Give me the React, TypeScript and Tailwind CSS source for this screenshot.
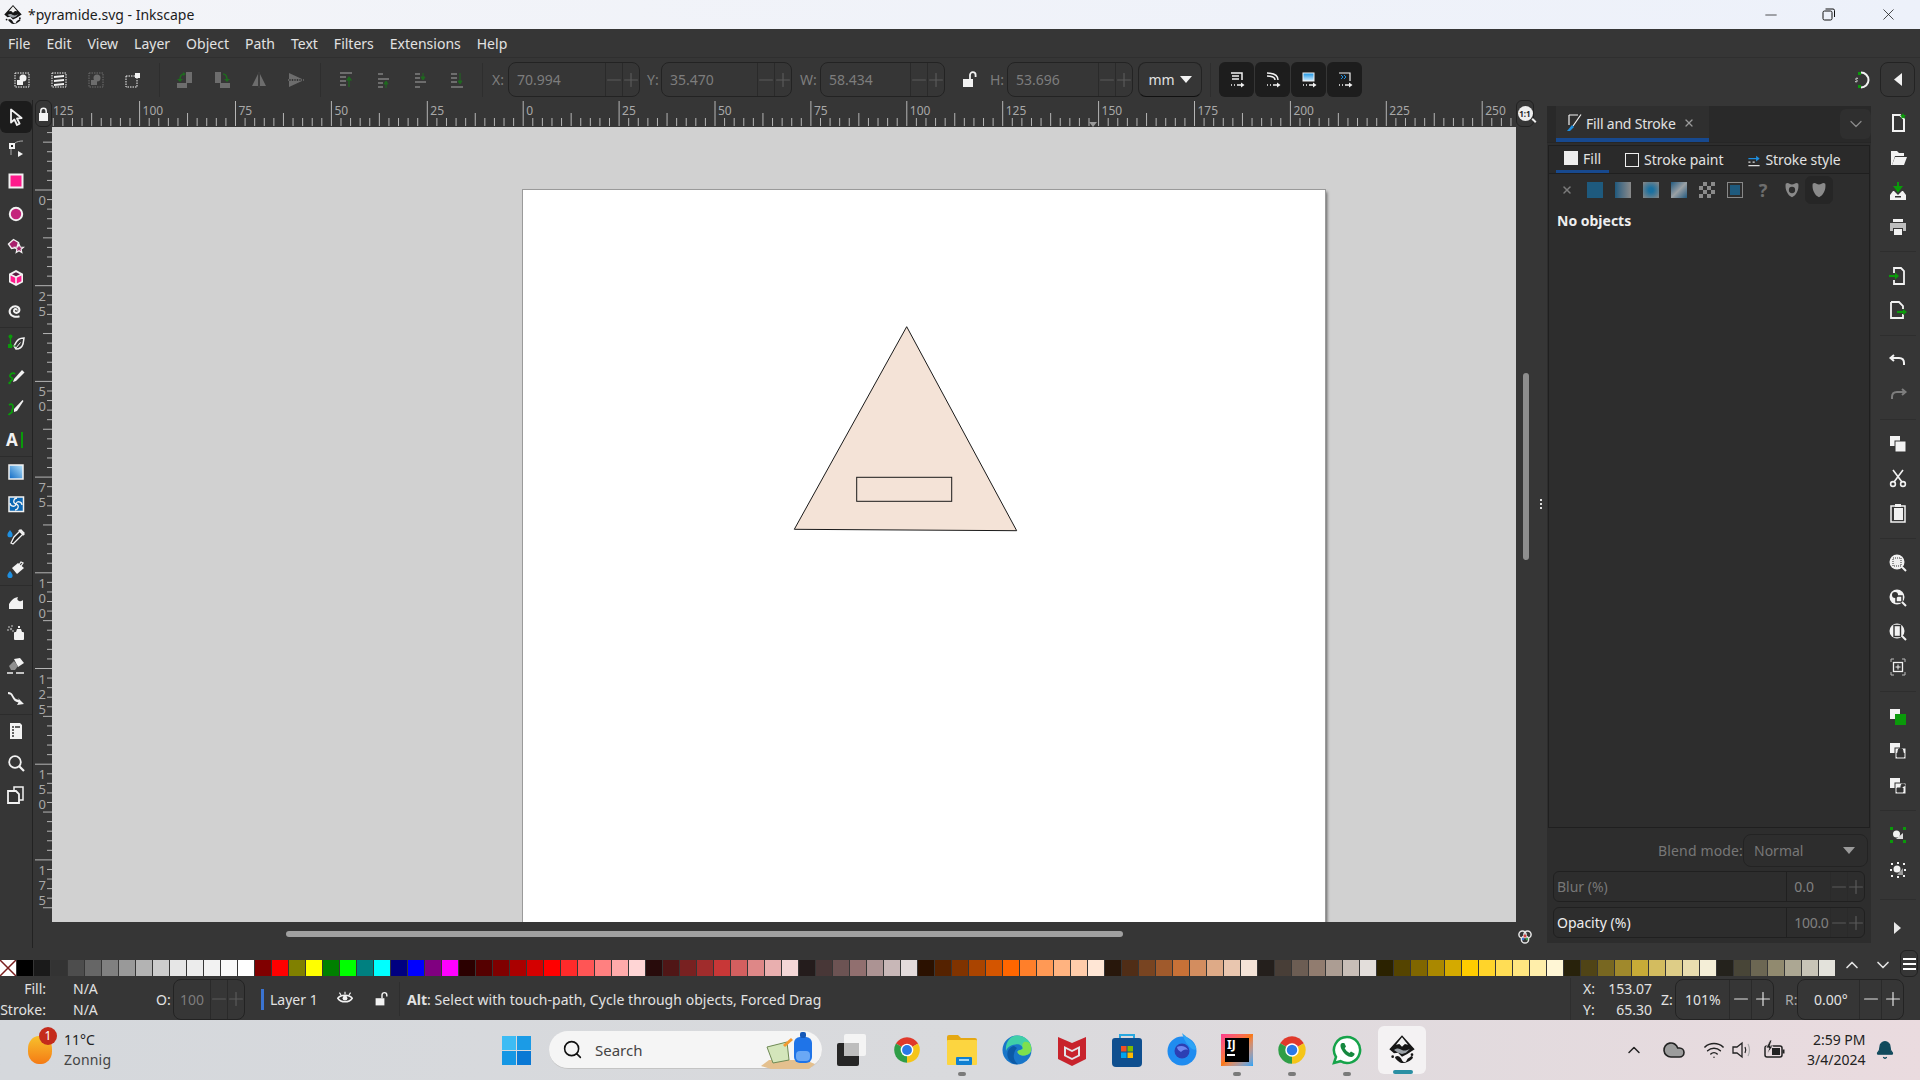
import type { ReactNode } from "react";
import { Bell, ChevronDown, ChevronUp, Cloud, Minus, Plus, Search, Wifi, X } from "lucide-react";

const W = "#f2f2f2";
const G = "#0a9a0a";
const B = "#1e8fe0";

const I = ({ children, size = 20 }: { children: ReactNode; size?: number }) => (
  <svg width={size} height={size} viewBox="0 0 20 20" fill="none" className="shrink-0">
    {children}
  </svg>
);

const palette = [
  "#000000", "#1a1a1a", "#333333", "#4d4d4d", "#666666", "#808080", "#999999", "#b3b3b3", "#cccccc", "#e6e6e6", "#ececec", "#f2f2f2", "#f9f9f9", "#ffffff",
  "#800000", "#ff0000", "#808000", "#ffff00", "#008000", "#00ff00", "#008080", "#00ffff", "#000080", "#0000ff", "#800080", "#ff00ff",
  "#2b0000", "#550000", "#800000", "#aa0000", "#d40000", "#ff0000", "#ff2a2a", "#ff5555", "#ff8080", "#ffaaaa", "#ffd5d5",
  "#280b0b", "#501616", "#782121", "#a02c2c", "#c83737", "#d35f5f", "#de8787", "#e9afaf", "#f4d7d7",
  "#241c1c", "#483737", "#6c5353", "#916f6f", "#ac9393", "#c8b7b7", "#e3dbdb",
  "#2b1100", "#552200", "#803300", "#aa4400", "#d45500", "#ff6600", "#ff7f2a", "#ff9955", "#ffb380", "#ffccaa", "#ffe6d5",
  "#28170b", "#502d16", "#784421", "#a05a2c", "#c87137", "#d38d5f", "#deaa87", "#e9c6af", "#f4e3d7",
  "#241f1c", "#483e37", "#6c5d53", "#917c6f", "#ac9d93", "#c8beb7", "#e3dedb",
  "#2b2200", "#554400", "#806600", "#aa8800", "#d4aa00", "#ffcc00", "#ffd42a", "#ffdd55", "#ffe680", "#ffeeaa", "#fff6d5",
  "#28220b", "#504416", "#786721", "#a0892c", "#c8ab37", "#d3bc5f", "#decd87", "#e9ddaf", "#f4eed7",
  "#24221c", "#484537", "#6c6753", "#918a6f", "#aca793", "#c8c4b7", "#e3e2db",
];

// left tool column, one entry per tool, sep = divider above, raw = not an svg
const tools: { sep?: boolean; raw?: boolean; icon: ReactNode }[] = [
  { icon: <path d="M5 2.500v13l3.400-3 2.600 5.500 2.600-1.300-2.600-5.200 4.600-.5z" fill="#222" stroke={W} strokeWidth="1.800" strokeLinejoin="round" /> },
  { icon: <><rect x="3" y="4" width="6" height="6" fill={W} /><rect x="5" y="6" width="2" height="2" fill="#222" /><path d="M9 4c2-1.500 5-2 8-2" stroke="#aaa" /><path d="M12 12l5 3-5 3z" fill={W} /><path d="M5 10v6" stroke="#aaa" /></> },
  { icon: <rect x="3.500" y="3.500" width="13" height="13" fill="#ff1a8c" stroke={W} strokeWidth="2" /> },
  { icon: <circle cx="10" cy="10" r="6.200" fill="#c4267c" stroke={W} strokeWidth="2" /> },
  { icon: <><path d="M2.500 8l5-4.500 5 3-1.500 5-5.500 1z" fill="#a8206c" stroke={W} strokeWidth="1.400" /><path d="M13 8l1.300 3 3.200.3-2.400 2 .7 3.200-2.800-1.700-2.800 1.700.7-3.200-2.400-2 3.200-.3z" fill="#a8206c" stroke={W} strokeWidth="1.200" /></> },
  { icon: <><path d="M10 2l7 3.700v8.600L10 18l-7-3.700V5.700z" fill={W} /><path d="M10 4.200l4 2-4 2-4-2z" fill="#5a1c42" /><path d="M4.600 7.500l4.600 2.300v5.800l-4.600-2.400z" fill="#ff1a8c" /><path d="M15.400 7.500l-4.600 2.300v5.800l4.600-2.400z" fill="#ff1a8c" /></> },
  { icon: <path d="M10.500 10.500c.8-1.400-1.400-2-2.300-.6-1 1.900 1.200 3.600 3.300 2.700 3-1.400 2.300-5.500-1-6.200-4.500-.7-8 3-6.500 7 1.200 3 5.800 4.200 9.500 2.800" stroke={W} strokeWidth="2" /> },
  { sep: true, icon: <><path d="M8 13c3-7 6-8 10-8l-1 6c-1 3-3 5-7 5z" fill="none" stroke={W} strokeWidth="1.500" /><path d="M9.500 15.500l5-6" stroke={W} /><circle cx="4.500" cy="3.500" r="2" fill={G} /><rect x="2" y="11" width="4" height="4" fill={G} /><path d="M4.500 5v6" stroke={G} strokeWidth="1.400" /><path d="M5 13h4" stroke={G} /></> },
  { icon: <><path d="M8 14L16 5l2.500 2.500L10 16l-3 1z" fill={W} /><path d="M5 17c-2-1 3-2 1-4-2-1-3-2-1-4 1-1 3-1 4 0" stroke={G} strokeWidth="1.800" /><circle cx="3.500" cy="18" r="1.200" fill={G} /></> },
  { icon: <><path d="M8 12L16.500 3l1 1-6.500 10-3 1z" fill={W} /><path d="M3 8c3-2 4 0 4 2s-2 4-1 5c-1 1-3 2-3.500 3" stroke={G} strokeWidth="1.800" /></> },
  { raw: true, icon: <div className="flex h-[20px] w-[20px] items-center"><span className="text-[17px] font-bold leading-none text-[#f2f2f2]">A</span><span className="ml-[3px] h-[16px] w-[2px] bg-[#0a9a0a]" /></div> },
  { sep: true, icon: <><defs><linearGradient id="gt" x1="0" y1="1" x2="1" y2="0"><stop offset="0" stopColor="#0b68c4" /><stop offset="1" stopColor="#b8e4fb" /></linearGradient></defs><rect x="3" y="3" width="14" height="14" fill="url(#gt)" stroke={W} strokeWidth="1.500" /></> },
  { icon: <><rect x="3" y="3" width="14.500" height="14.500" fill="#0a67b4" stroke={W} strokeWidth="1.500" /><path d="M10 10c-4-1-2-6 1-6M10 10c4 1 2 6-1 6M10 10c-1 4-6 2-6-1M10 10c1-4 6-2 6 1" stroke={W} strokeWidth="1.300" /></> },
  { icon: <><path d="M8 10l7-7 3 3-7 7-4 4-2-1 1-2z" fill="#222" stroke={W} strokeWidth="1.300" /><path d="M13 3l5 5" stroke={W} strokeWidth="2.400" /><path d="M4 3c1.500 2 2.600 3.300 2.600 4.700a2.600 2.600 0 01-5.200 0C1.400 6.300 2.500 5 4 3z" fill={B} /></> },
  { icon: <><path d="M6 9l6-5 6 5-7 6z" fill={W} /><path d="M13 6l2-3 2 1-2 3" stroke={W} strokeWidth="1.300" /><path d="M4 12c1.500 2 2.600 3 2.600 4.500a2.600 2.600 0 01-5.200 0C1.400 15 2.500 14 4 12z" fill={B} /></> },
  { sep: true, icon: <path d="M3 17v-5c2-3 4-6 9-7-1 2-1 3 1 4 2 .5 3 0 4-1v9z" fill={W} /> },
  { icon: <><rect x="8" y="9" width="10" height="8" rx="1" fill={W} /><path d="M10 9l1-3h4l1 3z" fill={W} /><rect x="12" y="3" width="2" height="2" fill={W} /><g fill="#999"><circle cx="3" cy="4" r="1" /><circle cx="6" cy="3" r="1" /><circle cx="5" cy="6" r="1.200" /><circle cx="2" cy="7" r="1" /><circle cx="7" cy="8" r="1" /></g></> },
  { icon: <><path d="M8 3l6-1 4 5-6 4z" fill={W} /><path d="M3 10l5-5 4 5-3 4H5z" fill="#8f8f8f" /><path d="M1 17h6M10 17h8" stroke={W} strokeWidth="1.400" /></> },
  { icon: <path d="M2 4c3 0 4 1 5.500 4s3 3.500 5.500 4l-1-2 6 6-7 1 1.500-2.500C9 14 7.500 12 6 9S4 6.500 2 6z" fill={W} /> },
  { sep: true, icon: <><path d="M4 2h10l2 2v14H4z" fill={W} /><path d="M6 6h2M6 9h2M6 12h2M6 15h2M9 6h5" stroke="#333" strokeWidth="1.300" /></> },
  { icon: <><circle cx="9" cy="9" r="5.800" stroke={W} strokeWidth="1.800" /><path d="M13 13l5 5" stroke={W} strokeWidth="2.200" /></> },
  { icon: <><path d="M8 5V2h9v13h-4" stroke={W} strokeWidth="1.500" /><path d="M2 6h8l3 3v9H2z" fill="#333" stroke={W} strokeWidth="1.800" /></> },
];

const doc = "M5 2h7l4 4v12H5z";
const right: ({ icon: ReactNode } | { sep: number })[] = [
  { icon: <><path d={doc} stroke={W} strokeWidth="2" /><path d="M15 0l1 2 2 .3-1.500 1.400.4 2-1.900-1-1.900 1 .4-2L12 2.300 14 2z" fill={G} /></> },
  { icon: <><path d="M3 3h6l2 2h5v3H7l-3 9H3z" fill={W} /><path d="M7 9h12l-3 8H4z" fill={W} /></> },
  { icon: <><path d="M10 0v6M7 5l3 4 3-4z" stroke={G} strokeWidth="2" fill={G} /><path d="M5 9L2 13v5h16v-5l-3-4h-1l-4 4-4-4z" fill={W} /><rect x="7" y="14" width="6" height="1.500" fill="#333" /></> },
  { icon: <><rect x="5" y="2" width="10" height="3" fill={W} /><path d="M2 6h16v8h-3v-3H5v3H2z" fill="#bdbdbd" /><rect x="6" y="12" width="8" height="6" fill={W} /></> },
  { sep: 14.5 },
  { icon: <><path d="M6 7V2h7l3 3v13H6v-4" stroke={W} strokeWidth="1.800" /><path d="M1 10h8" stroke={G} strokeWidth="2.200" /><path d="M7 6.500l4 3.500-4 3.500z" fill={G} /></> },
  { icon: <><path d="M3 2h8l4 4v3M15 14v4H3V2" stroke={W} strokeWidth="1.800" /><path d="M9 12h8" stroke={G} strokeWidth="2.200" /><path d="M15 9l4 3-4 3z" fill={G} /></> },
  { sep: 15 },
  { icon: <><path d="M6 5l-3.500 3L6 11" stroke={W} strokeWidth="2" /><path d="M3 8h8c3 0 5 1.500 5 5v2" stroke={W} strokeWidth="2" /></> },
  { icon: <><path d="M14 5l3.500 3L14 11" stroke="#7d7d7d" strokeWidth="2" /><path d="M17 8H9c-3 0-5 1.500-5 5v2" stroke="#7d7d7d" strokeWidth="2" /></> },
  { sep: 15 },
  { icon: <><rect x="2" y="2" width="10" height="10" fill={W} /><rect x="7" y="7" width="11" height="11" fill={W} stroke="#333" /></> },
  { icon: <><path d="M5 2l9 12M15 2L6 14" stroke={W} strokeWidth="1.600" /><circle cx="5" cy="16" r="2.400" stroke={W} strokeWidth="1.600" /><circle cx="15" cy="16" r="2.400" stroke={W} strokeWidth="1.600" /></> },
  { icon: <><rect x="3" y="3" width="14" height="16" stroke={W} strokeWidth="1.500" /><rect x="6" y="5" width="9" height="12" fill={W} /><rect x="7" y="1" width="6" height="3" fill={W} /></> },
  { sep: 16 },
  { icon: <><circle cx="9" cy="9" r="7.500" fill={W} /><rect x="5" y="5" width="8" height="8" fill="#eee" stroke="#333" strokeDasharray="1 1" /><path d="M14 14l4 4" stroke={W} strokeWidth="2" /></> },
  { icon: <><circle cx="9" cy="9" r="7.500" fill={W} /><rect x="8" y="8" width="6" height="6" fill={W} stroke="#333" strokeWidth="1.500" /><circle cx="7" cy="7" r="3" fill="#333" /><path d="M14 14l4 4" stroke={W} strokeWidth="2" /></> },
  { icon: <><circle cx="9" cy="9" r="7.500" fill={W} /><rect x="6" y="3.500" width="6.500" height="11" fill={W} stroke="#333" strokeWidth="1.400" /><path d="M14 14l4 4" stroke={W} strokeWidth="2" /></> },
  { icon: <><path d="M3 5V2h3M14 2h3v3M17 15v3h-3M6 18H3v-3" stroke="#bbb" strokeWidth="1" /><rect x="5.500" y="5.500" width="9" height="9" stroke={W} strokeWidth="1.300" /><path d="M10 7.500v5M7.500 10h5" stroke={W} /></> },
  { sep: 15.5 },
  { icon: <><rect x="2" y="2" width="10" height="10" fill={W} /><rect x="7" y="7" width="11" height="11" fill="#0a9a0a" /></> },
  { icon: <><rect x="2" y="2" width="10" height="10" fill={W} /><rect x="7" y="7" width="11" height="11" fill={W} stroke="#333" /><path d="M10 12v-2a2.500 2.500 0 015 0v2M9 12h7v4H9z" fill="#333" stroke="#333" /></> },
  { icon: <><rect x="2" y="2" width="10" height="10" fill={W} /><rect x="7" y="7" width="11" height="11" fill={W} stroke="#333" /><path d="M13 12v-2a2 2 0 014 0M9 12h6v4H9z" fill="#333" stroke="#333" /></> },
  { sep: 15 },
  { icon: <><g fill={G}><rect x="2" y="2" width="3" height="3" /><rect x="15" y="2" width="3" height="3" /><rect x="2" y="15" width="3" height="3" /><rect x="15" y="15" width="3" height="3" /></g><path d="M8 14h7v-6z" fill="#ddd" /><circle cx="8.500" cy="9" r="3.500" fill={W} /></> },
  { icon: <><g fill={W}><rect x="3" y="3" width="2" height="2" /><rect x="15" y="3" width="2" height="2" /><rect x="3" y="15" width="2" height="2" /><rect x="15" y="15" width="2" height="2" /><rect x="9" y="2" width="2" height="2" /><rect x="9" y="16" width="2" height="2" /><rect x="2" y="9" width="2" height="2" /><rect x="16" y="9" width="2" height="2" /></g><path d="M9 15h6V8z" fill="#999" /><circle cx="9" cy="9" r="3.500" fill={W} /></> },
  { sep: 24 },
  { icon: <path d="M6 4l7 6-7 6z" fill="#e8e8e8" /> },
];

const Spin = ({ value, cls, ctlCls = "w-[17px]", text = "text-[#7d7d7d]", ctl = "text-[#5a5a5a]", tall = 35, pad = "pl-2" }: { value: string; cls: string; ctlCls?: string; text?: string; ctl?: string; tall?: number; pad?: string }) => (
  <div className={`flex shrink-0 rounded-lg border border-[#232323] ${cls}`} style={{ height: tall }}>
    <span className={`flex flex-1 items-center ${pad} ${text}`}>{value}</span>
    <span className={`flex items-center justify-center border-l border-[#2a2a2a] ${ctlCls} ${ctl}`}><Minus size={22} strokeWidth={1.3} className="shrink-0" /></span>
    <span className={`flex items-center justify-center border-l border-[#2a2a2a] ${ctlCls} ${ctl}`}><Plus size={22} strokeWidth={1.3} className="shrink-0" /></span>
  </div>
);

const Label = ({ t, w }: { t: string; w: string }) => <span className={`shrink-0 text-[#7d7d7d] ${w}`}>{t}</span>;

const TopBtn = ({ children }: { children: ReactNode }) => <div className="flex h-[35px] w-[37px] items-center justify-center">{children}</div>;

const XformBtn = ({ children }: { children: ReactNode }) => <div className="flex h-[35px] w-[35px] shrink-0 items-center justify-center rounded-md bg-[#1d1d1d]">{children}</div>;

const xformBase = <><path d="M4 3h11v7" stroke={W} strokeWidth="1.500" /><path d="M5 6h7M5 9h7" stroke={W} strokeWidth="1.500" /><path d="M4 15h1M7 15h1M10 15h6" stroke={W} strokeWidth="1.500" /><path d="M14 12.500l3.500 2.500-3.500 2.500z" fill={W} /></>;

const Ruler = () => (
  <svg width="1464" height="27" className="block shrink-0">
    {Array.from({ length: 160 }).map((_, i) => {
      const x = -8.3 + i * 9.59;
      const major = i % 10 === 0;
      const half = i % 5 === 0;
      return <line key={i} x1={x} x2={x} y1={major ? 1 : half ? 13 : 18} y2={26} stroke="#b5b5b5" strokeWidth="1" />;
    })}
    {["125", "100", "75", "50", "25", "0", "25", "50", "75", "100", "125", "150", "175", "200", "225", "250"].map((t, i) => (
      <text key={i} x={i === 0 ? 1 : -8.3 + i * 95.9 + 3} y={15} fontSize="12" fill="#a8a8a8">{t}</text>
    ))}
    <path d="M1041 27l-4-5h8z" fill="#9a9a9a" />
  </svg>
);

const VRuler = () => (
  <svg width="19" height="820" className="block shrink-0">
    {Array.from({ length: 86 }).map((_, i) => {
      const y = 63 - 95.7 + i * 9.57;
      const major = i % 10 === 0;
      const half = i % 5 === 0;
      return <line key={i} y1={y} y2={y} x1={major ? 2 : half ? 10 : 14} x2={19} stroke="#b5b5b5" strokeWidth="1" />;
    })}
    {["0", "25", "50", "75", "100", "125", "150", "175"].map((t, i) =>
      t.split("").map((c, j) => (
        <text key={`${i}-${j}`} x={5.5} y={63 + i * 95.7 + 15 + j * 15} fontSize="13" fill="#a8a8a8">{c}</text>
      )),
    )}
  </svg>
);

const Chrome = ({ size = 28 }: { size?: number }) => (
  <svg width={size} height={size} viewBox="0 0 24 24">
    <path d="M12 12L2.500 6.500A11 11 0 0121.500 6.500z" fill="#e0392b" />
    <path d="M12 12l9.500-5.500A11 11 0 0112 23z" fill="#f5c518" />
    <path d="M12 12v11A11 11 0 012.500 6.500z" fill="#2f9e47" />
    <circle cx="12" cy="12" r="5.400" fill="#fff" />
    <circle cx="12" cy="12" r="4.200" fill="#2a79e6" />
  </svg>
);

const InkscapeLogo = ({ size = 24 }: { size?: number }) => (
  <svg width={size} height={size} viewBox="0 0 24 24">
    <path d="M12 1L2.500 11.500 6 14.500l3-.5 3 3 4-2 5.500-3.500z" fill="#161616" />
    <path d="M12 2.500L7.500 8l2.500-.5L12 9.500l2.200-2L16.500 8z" fill="#f2f2f2" />
    <path d="M6 12c3-2 4-1 6 0s4 0 6-1l-3 3-3 1-3-1z" fill="#9aa0a6" />
    <path d="M7 17c2-1 3 0 4 1s1 3 3 3 1-2 3-3 2-2 3-1-2 3-4 4-5 1-6 0-4-3-3-4z" fill="#161616" />
    <circle cx="19.500" cy="15.500" r="1" fill="#161616" />
    <circle cx="5" cy="17" r="1" fill="#161616" />
  </svg>
);

const taskIcons: { dot?: boolean; icon: ReactNode }[] = [
  { icon: <svg width="32" height="34" viewBox="0 0 32 34"><rect x="8" y="1" width="22" height="22" rx="2" fill="#f4f4f4" /><rect x="1" y="10" width="22" height="23" rx="2" fill="#262626" /><rect x="8" y="10" width="15" height="13" fill="#bdbdbd" /></svg> },
  { icon: <Chrome size={28} /> },
  { dot: true, icon: <svg width="30" height="32" viewBox="0 0 30 32"><path d="M0 3a2 2 0 012-2h9l3 3h14a2 2 0 012 2v3H0z" fill="#e5a812" /><rect y="6" width="30" height="25" rx="1" fill="#fcd540" /><rect x="9" y="23" width="16" height="8" rx="1" fill="#0f7fd1" /><rect x="12" y="25" width="10" height="2" fill="#9fd5f5" /></svg> },
  { icon: <svg width="30" height="30" viewBox="0 0 30 30"><circle cx="15" cy="15" r="14.500" fill="#1976c9" /><path d="M15 .5c8 0 14.500 6 14.500 13 0 5-4 7-8 7-3 0-6-1.500-6-4 1-2 4-1 5-3 .7-2-3-5-7-4C8 10 5 13 4 16 3 8 8 .5 15 .5z" fill="#40d0a8" /><path d="M28 9c1.500 3 1.500 6 .5 8-1 2-4 3.500-7 3.500-3 0-6-1.500-6-4 1-2 5-1 5.500-3-1-3-1-5 1-6.500 3-.5 5 .5 6 2z" fill="#7ee04e" /><path d="M12 11c-5 1-8 6-6 12 2 4 6 7 10 6-3-2-5-6-4-10 .5-3 2-5 3-6z" fill="#0c5aa6" /></svg> },
  { icon: <svg width="28" height="32" viewBox="0 0 28 32"><path d="M0 3l14 6 14-6v22l-14 7-14-7z" fill="#c8232c" /><path d="M6 12l8 4 8-4v10l-8 4-8-4z" fill="#e2e4e8" /><path d="M8 15l6 3 6-3v6l-6 3-6-3z" fill="#c8232c" /></svg> },
  { icon: <svg width="30" height="36" viewBox="0 0 30 36"><path d="M8 7V3h14v4" fill="none" stroke="#28a8e0" strokeWidth="2" /><path d="M0 9a3 3 0 013-3h24a3 3 0 013 3v22a4 4 0 01-4 4H4a4 4 0 01-4-4z" fill="#0f4f8f" /><rect x="9" y="14" width="5.500" height="5.500" fill="#f25022" /><rect x="15.500" y="14" width="5.500" height="5.500" fill="#7fba00" /><rect x="9" y="20.500" width="5.500" height="5.500" fill="#00a4ef" /><rect x="15.500" y="20.500" width="5.500" height="5.500" fill="#ffb900" /></svg> },
  { icon: <svg width="30" height="34" viewBox="0 0 30 34"><circle cx="15" cy="18" r="14.500" fill="#1f8cf0" /><path d="M15 0c3 3 11 8 14 14 1 4-3 3-5 1-3-3-6-5-9-15z" fill="#2ea4f5" /><circle cx="15" cy="18" r="7.500" fill="#2c3fb3" /><path d="M10 14c4-2 9-1 11 3-3-1-5 0-7 2-2-1-4-3-4-5z" fill="#6d87f0" /></svg> },
  { dot: true, icon: <div className="flex h-8 w-8 items-center justify-center bg-gradient-to-br from-[#fc3a8e] via-[#f97a12] to-[#09a3f7] p-[4px]"><div className="flex h-full w-full flex-col bg-black pl-[2px] text-[12px] font-bold leading-[14px] text-white"><span>IJ</span><span className="mt-[2px] h-[2px] w-[8px] bg-white" /></div></div> },
  { dot: true, icon: <Chrome size={30} /> },
  { dot: true, icon: <svg width="30" height="30" viewBox="0 0 30 30"><path d="M15 2a13 13 0 00-11 20L2 28l6.500-1.800A13 13 0 1015 2z" fill="#fff" stroke="#16a34a" strokeWidth="2.500" /><path d="M10 8c-2 1-2 4 0 7 2 4 6 7 9 7 2 0 4-2 3.500-3.500l-3.500-2-1.500 1.500c-2-.8-4-3-4.800-4.700L14 11.500 12.300 8z" fill="#16883f" /></svg> },
];

function App() {
  return (
    <div className="flex h-[1080px] w-[1920px] flex-col overflow-hidden bg-[#363636] font-['Noto_Sans',sans-serif] text-[14px] text-[#e2e2e2]">
      {/* window title */}
      <div className="flex h-[29px] shrink-0 items-center bg-gradient-to-r from-[#f3f4f8] to-[#edf1fa] text-[14px] text-[#1c1c1c]">
        <span className="ml-[2px]"><InkscapeLogo size={22} /></span>
        <span className="ml-[4px]">*pyramide.svg - Inkscape</span>
        <div className="ml-auto flex items-center">
          <Minus size={18} strokeWidth={1} className="mr-[42px]" />
          <svg width="13" height="13" viewBox="0 0 13 13" fill="none" stroke="#111" className="mr-[44px]"><rect x="1" y="3" width="9" height="9" rx="1.500" /><path d="M3.500 1H11a1.500 1.500 0 011.500 1.500V9" /></svg>
          <X size={19} strokeWidth={1} className="mr-[22px]" />
        </div>
      </div>

      {/* menu */}
      <div className="flex h-[29px] shrink-0 items-center border-b border-[#2f2f2f] pl-[8px] pt-[2px]">
        {["File", "Edit", "View", "Layer", "Object", "Path", "Text", "Filters", "Extensions", "Help"].map((m) => (
          <span key={m} className="mr-[16px] leading-none">{m}</span>
        ))}
      </div>

      {/* command toolbar */}
      <div className="flex h-[42px] shrink-0 items-center pl-[3px] pt-[1px]">
        <TopBtn><I><rect x="3" y="3" width="14" height="14" stroke={W} strokeDasharray="1.500 1" /><circle cx="11" cy="8" r="3.500" fill={W} /><rect x="5" y="10" width="6" height="5" fill={W} /></I></TopBtn>
        <TopBtn><I><rect x="3" y="3" width="14" height="14" stroke={W} strokeDasharray="1.500 1" /><path d="M5 6l10-1v2L5 8zM5 10l10-1v2L5 12zM5 14l10-1v2l-10 1z" fill={W} /></I></TopBtn>
        <TopBtn><I><rect x="3" y="3" width="14" height="14" stroke="#6d6d6d" strokeDasharray="1.500 1" /><circle cx="11" cy="8" r="3.500" fill="#6d6d6d" /><rect x="5" y="10" width="6" height="5" fill="#6d6d6d" /></I></TopBtn>
        <TopBtn><I><rect x="3" y="6" width="11" height="11" stroke={W} strokeDasharray="1.500 1" /><rect x="12" y="3" width="5" height="5" fill={W} /></I></TopBtn>
        <div className="ml-[8px] mr-[6px] h-[34px] w-px bg-[#2e2e2e]" />
        <TopBtn><I><rect x="11" y="2" width="6" height="11" fill="#6d6d6d" /><rect x="2" y="13" width="10" height="5" fill="#6d6d6d" /><path d="M9 4C6 4 5 6 5 10" stroke="#1f6a1f" strokeWidth="1.600" /><path d="M2 9l3 3 3-3zM8 2v4l3-2z" fill="#1f6a1f" /></I></TopBtn>
        <TopBtn><I><rect x="3" y="2" width="6" height="11" fill="#6d6d6d" /><rect x="8" y="13" width="10" height="5" fill="#6d6d6d" /><path d="M11 4c3 0 4 2 4 6" stroke="#1f6a1f" strokeWidth="1.600" /><path d="M12 9l3 3 3-3z" fill="#1f6a1f" /></I></TopBtn>
        <TopBtn><I><path d="M9 4L3 16h6zM11 4l6 12h-6z" fill="#6d6d6d" /><path d="M10 2v16" stroke="#444" /></I></TopBtn>
        <TopBtn><I><path d="M3 3l13 6H3zM3 11h13L3 17z" fill="#6d6d6d" /><path d="M2 10h16" stroke="#8a8a8a" strokeDasharray="1.500 1" /></I></TopBtn>
        <div className="ml-[6px] mr-[6px] h-[34px] w-px bg-[#2e2e2e]" />
        <TopBtn><I><path d="M4 3h12M4 7h6M4 11h6M4 15h6" stroke="#6d6d6d" strokeWidth="2" /><path d="M13 17V8M11 10l2-3 2 3z" stroke="#1f6a1f" strokeWidth="1.200" fill="#1f6a1f" /></I></TopBtn>
        <TopBtn><I><path d="M5 4h5M5 9h11M5 13h5M5 17h5" stroke="#6d6d6d" strokeWidth="2" /><path d="M13 18v-6M11 14l2-3 2 3z" stroke="#1f6a1f" fill="#1f6a1f" /></I></TopBtn>
        <TopBtn><I><path d="M5 4h5M5 8h5M5 12h11M5 17h5" stroke="#6d6d6d" strokeWidth="2" /><path d="M13 3v6M11 7l2 3 2-3z" stroke="#1f6a1f" fill="#1f6a1f" /></I></TopBtn>
        <TopBtn><I><path d="M4 4h6M4 8h6M4 12h6M4 17h12" stroke="#6d6d6d" strokeWidth="2" /><path d="M13 3v10M11 11l2 3 2-3z" stroke="#1f6a1f" fill="#1f6a1f" /></I></TopBtn>
        <div className="ml-[7px] mr-[9px] h-[34px] w-px bg-[#2e2e2e]" />
        <Label t="X:" w="w-[16px]" />
        <Spin value="70.994" cls="w-[132px]" />
        <Label t="Y:" w="ml-[7px] w-[14px]" />
        <Spin value="35.470" cls="w-[131px]" />
        <Label t="W:" w="ml-[8px] w-[20px]" />
        <Spin value="58.434" cls="w-[125px]" />
        <div className="ml-[14px] mr-[11px] w-[20px]"><I><path d="M4 9h10v8H4z" fill={W} /><path d="M11 9V5a2.800 2.800 0 015.600 0v2" stroke={W} strokeWidth="1.800" /></I></div>
        <Label t="H:" w="w-[17px]" />
        <Spin value="53.696" cls="w-[126px]" />
        <div className="ml-[5px] flex h-[35px] w-[64px] shrink-0 items-center justify-center gap-[5px] rounded-lg border border-[#232323] border-b-[#111]">mm<svg width="12" height="8"><path d="M0 0h12L6 7z" fill={W} /></svg></div>
        <div className="ml-[8px] mr-[8px] h-[34px] w-px bg-[#2e2e2e]" />
        <div className="flex gap-[1px]">
          <XformBtn><I>{xformBase}</I></XformBtn>
          <XformBtn><I><path d="M4 3c6 0 11 1 11 7" stroke={W} strokeWidth="1.500" /><path d="M4 6c5 0 8 1 8 4" stroke={W} strokeWidth="1.500" /><path d="M4 15h1M7 15h1M10 15h6" stroke={W} strokeWidth="1.500" /><path d="M14 12.500l3.500 2.500-3.500 2.500z" fill={W} /></I></XformBtn>
          <XformBtn><I><defs><linearGradient id="xg" x1="0" y1="0" x2="0" y2="1"><stop offset="0" stopColor="#1593e5" /><stop offset="1" stopColor="#d8f0ff" /></linearGradient></defs><rect x="4" y="3" width="11" height="8" fill="url(#xg)" stroke={W} /><path d="M4 15h1M7 15h1M10 15h6" stroke={W} strokeWidth="1.500" /><path d="M14 12.500l3.500 2.500-3.500 2.500z" fill={W} /></I></XformBtn>
          <XformBtn><I><path d="M4 3h11v8" stroke={W} strokeWidth="1.200" /><path d="M6 5l2 2-2 2M9 5l2 2-2 2" stroke={B} /><path d="M4 15h1M7 15h1M10 15h6" stroke={W} strokeWidth="1.500" /><path d="M14 12.500l3.500 2.500-3.500 2.500z" fill={W} /></I></XformBtn>
        </div>
        <div className="ml-auto mr-[9px]"><I><path d="M10 2.500a7.500 7.500 0 010 15" stroke={W} strokeWidth="2" /><rect x="7" y="2" width="3" height="3" fill={G} /><rect x="7" y="15" width="3" height="3" fill={G} /><path d="M7 8.500c-2-1-3 .5-1.500 1.500s.5 2.500-1.500 1.500" stroke={W} strokeWidth="1" /></I></div>
        <div className="mr-[5px] flex h-[35px] w-[35px] items-center justify-center rounded-lg border border-[#232323]"><svg width="8" height="13"><path d="M8 0v13L0 6.500z" fill={W} /></svg></div>
      </div>

      {/* workspace */}
      <div className="flex h-[858px] shrink-0">
        <div className="h-[848px] w-[33px] shrink-0 border-r border-[#222] pt-[0.5px]">
          {tools.map((t, i) => (
            <div key={i} className={`flex h-[32.3px] w-full items-center justify-center ${t.sep ? "border-t border-[#2c2c2c]" : ""} ${i === 0 ? "rounded-md bg-[#1c1c1c]" : ""}`}>
              {t.raw ? t.icon : <I size={20}>{t.icon}</I>}
            </div>
          ))}
        </div>

        <div className="flex w-[1501px] shrink-0 flex-col">
          <div className="flex h-[27px] shrink-0">
            <div className="flex w-[19px] justify-end">
              <div className="flex h-[27px] w-[17px] items-center justify-center rounded-md border border-[#222]"><svg width="11" height="14"><path d="M1 6h9v8H1z" fill={W} /><path d="M2.800 6V4a2.700 2.700 0 015.400 0v2" stroke={W} strokeWidth="1.500" fill="none" /></svg></div>
            </div>
            <Ruler />
            <div className="flex h-[27px] w-[18px] items-center justify-center rounded-md border border-[#222]">
              <div className="relative flex h-[15px] w-[15px] items-center justify-center rounded-full bg-[#eee] text-[8px] font-bold leading-none text-[#222]">
                1:1
                <span className="absolute bottom-[-2px] right-[-2px] h-[5px] w-[2px] -rotate-45 bg-[#eee]" />
              </div>
            </div>
          </div>
          <div className="flex h-[795px] shrink-0">
            <div className="h-[820px] overflow-hidden"><VRuler /></div>
            <div className="relative h-[795px] w-[1464px] shrink-0 overflow-hidden bg-[#d1d1d1]">
              {/* the page sits on a free canvas */}
              <div className="absolute left-[471px] top-[63px] h-[900px] w-[802px] bg-white shadow-[2px_2px_3px_rgba(0,0,0,0.55)] outline outline-1 outline-[#9a9a9a]">
                <svg width="802" height="500" className="absolute left-0 top-0">
                  <path d="M383.700 136.700L271.300 339.300L493.700 340.700Z" fill="#f4e3d7" stroke="#1a1a1a" strokeWidth="1" />
                  <rect x="333.700" y="287.300" width="95" height="24" fill="#f4e3d7" stroke="#1a1a1a" strokeWidth="1" />
                </svg>
              </div>
            </div>
            <div className="w-[18px] pl-[7px] pt-[246px]">
              <div className="h-[187px] w-[6px] rounded-full bg-[#8e8e8e]" />
            </div>
          </div>
          <div className="flex h-[36px] shrink-0">
            <div className="w-[19px]" />
            <div className="w-[1464px] pl-[234px] pt-[9px]"><div className="h-[6px] w-[837px] rounded-full bg-[#a0a0a0]" /></div>
            <div className="flex w-[18px] justify-center pt-[6px]">
              <svg width="18" height="18" viewBox="0 0 18 18" fill="none"><circle cx="6.500" cy="6.500" r="3.600" stroke="#e8e8e8" strokeWidth="1.500" /><circle cx="11.500" cy="6.500" r="3.600" stroke="#e8e8e8" strokeWidth="1.500" /><circle cx="9" cy="11.500" r="3.600" stroke="#e8e8e8" strokeWidth="1.500" /><circle cx="9" cy="8" r="1.500" fill="#d64040" /><circle cx="7" cy="11" r="1.200" fill="#3a6fd0" /><circle cx="11" cy="11" r="1.200" fill="#3aa04a" /></svg>
            </div>
          </div>
        </div>

        {/* gutter with resize handle */}
        <div className="flex w-[13px] shrink-0 items-center justify-center pb-[50px]">
          <div className="flex flex-col gap-[2px]">
            <span className="h-[2px] w-[2px] bg-[#ddd]" /><span className="h-[2px] w-[2px] bg-[#ddd]" /><span className="h-[2px] w-[2px] bg-[#ddd]" />
          </div>
        </div>

        {/* dock */}
        <div className="mt-[6px] flex h-[837px] w-[324px] shrink-0 flex-col bg-[#2d2d2d]">
          <div className="flex h-[37px] shrink-0 items-stretch border-b border-[#262626] bg-[#292929] pl-[9px]">
            <div className="flex w-[153px] items-center border-b-[4px] border-[#17498f] bg-[#2f2f2f] pl-[10px] pt-[2px]">
              <I size={20}><path d="M7 13L15 1.500M3 2h9M3 2v10" stroke={W} strokeWidth="1.200" /><path d="M6 12l2 2-4 4-3 0z" fill={B} /></I>
              <span className="whitespace-nowrap tracking-[-0.2px]">Fill and Stroke</span>
              <X size={12} strokeWidth={2.5} className="ml-[7px] text-[#9a9a9a]" />
            </div>
            <div className="ml-auto mt-[3px] flex h-[30px] w-[31px] items-center justify-center rounded-md bg-[#2f2f2f]"><ChevronDown size={20} strokeWidth={1.5} className="text-[#8a8a8a]" /></div>
          </div>
          <div className="mx-[1px] mt-[2px] flex h-[683px] shrink-0 flex-col border border-[#1f1f1f]">
            <div className="flex h-[28px] shrink-0 items-stretch border-b border-[#1f1f1f] bg-[#2a2a2a] pl-[7px]">
              <div className="flex w-[53px] items-center border-b-[3px] border-[#17498f] pl-[8px]">
                <span className="h-[14px] w-[14px] bg-[#eee]" /><span className="ml-[5px]">Fill</span>
              </div>
              <div className="ml-[16px] flex items-center">
                <span className="h-[14px] w-[14px] border-[1.5px] border-[#eee]" /><span className="ml-[5px] whitespace-nowrap">Stroke paint</span>
              </div>
              <div className="ml-[23px] flex items-center">
                <I size={14}><path d="M2 8h15" stroke={B} strokeWidth="1.800" /><path d="M13 4l5 4-5 4z" fill={B} /><path d="M2 13h3M8 13h3M2 18h16" stroke="#ddd" strokeWidth="1.600" /></I>
                <span className="ml-[5px] whitespace-nowrap tracking-[-0.1px]">Stroke style</span>
              </div>
            </div>
            <div className="flex h-[32px] shrink-0 items-center pl-[10px]">
              <span className="flex w-[16px] justify-center"><X size={12} strokeWidth={3} className="text-[#7c7c7c]" /></span>
              <span className="ml-[12px] h-[16px] w-[16px] bg-[#1e5a7e]" />
              <span className="ml-[12px] h-[16px] w-[16px] bg-gradient-to-r from-[#1e5a7e] to-[#8a8a8a]" />
              <span className="ml-[12px] h-[16px] w-[16px] bg-[radial-gradient(circle,#1a70a0_20%,#7c8488_90%)]" />
              <span className="ml-[12px] h-[16px] w-[16px] bg-gradient-to-br from-[#1e5a7e] via-[#9aa0a4] to-[#1e5a7e]" />
              <span className="ml-[12px] h-[16px] w-[16px] bg-[repeating-conic-gradient(#8a8a8a_0_25%,#2d2d2d_0_50%)] bg-[length:8px_8px]" />
              <span className="ml-[12px] flex h-[16px] w-[16px] items-center justify-center border border-[#888]"><span className="h-[10px] w-[10px] bg-[#1e5a7e]" /></span>
              <span className="ml-[12px] flex w-[16px] justify-center text-[18px] font-bold leading-none text-[#6e6e6e]">?</span>
              <span className="ml-[12px] w-[16px]"><I size={18}><path d="M3 3c3-2 4 1 7 1s4-3 7-1c1 6-2 13-7 15C5 16 2 9 3 3z" fill="#8a8a8a" /><circle cx="10" cy="10" r="3.500" fill="#2d2d2d" /></I></span>
              <span className="ml-[6px] flex h-[28px] w-[28px] items-center justify-center rounded-md border border-[#262626] bg-[#262626]"><I size={18}><path d="M3 3c3-2 4 1 7 1s4-3 7-1c1 6-2 13-7 15C5 16 2 9 3 3z" fill="#8a8a8a" /></I></span>
            </div>
            <div className="ml-[8px] mt-[4px] font-bold text-[#eee]">No objects</div>
          </div>
          <div className="mt-[6px] flex h-[33px] shrink-0 items-center justify-end pr-[3px]">
            <span className="tracking-[0.15px] text-[#777]">Blend mode:</span>
            <div className="flex h-[33px] w-[125px] items-center rounded-lg border border-[#232323] pl-[10px] text-[#777]">
              Normal
              <svg width="12" height="7" className="ml-auto mr-[12px]"><path d="M0 0h12L6 7z" fill="#9a9a9a" /></svg>
            </div>
          </div>
          <div className="ml-[6px] mt-[4px] flex h-[31px] w-[312px] shrink-0 rounded-md border border-[#202020] text-[#777]">
            <span className="flex w-[235px] items-center border-r border-[#202020] pl-[3px]">Blur (%)</span>
            <span className="flex w-[43px] items-center pl-[7px] text-[#808080]">0.0</span>
            <span className="flex w-[17px] items-center justify-center border-l border-[#2a2a2a] text-[#5a5a5a]"><Minus size={22} strokeWidth={1.3} className="shrink-0" /></span>
            <span className="flex w-[17px] items-center justify-center border-l border-[#2a2a2a] text-[#5a5a5a]"><Plus size={22} strokeWidth={1.3} className="shrink-0" /></span>
          </div>
          <div className="ml-[6px] mt-[5px] flex h-[31px] w-[312px] shrink-0 rounded-md border border-[#202020]">
            <span className="flex w-[235px] items-center border-r border-[#202020] pl-[3px] text-[#eee]">Opacity (%)</span>
            <span className="flex w-[43px] items-center pl-[7px] tracking-[-0.3px] text-[#808080]">100.0</span>
            <span className="flex w-[17px] items-center justify-center border-l border-[#2a2a2a] text-[#5a5a5a]"><Minus size={22} strokeWidth={1.3} className="shrink-0" /></span>
            <span className="flex w-[17px] items-center justify-center border-l border-[#2a2a2a] text-[#5a5a5a]"><Plus size={22} strokeWidth={1.3} className="shrink-0" /></span>
          </div>
        </div>

        {/* right command bar */}
        <div className="ml-[4px] flex w-[45px] shrink-0 flex-col pt-[6px]">
          {right.map((r, i) =>
            "sep" in r ? (
              <div key={i} className="flex items-center justify-center" style={{ height: r.sep }}><span className="h-px w-[36px] bg-[#2e2e2e]" /></div>
            ) : (
              <div key={i} className="flex h-[34.5px] shrink-0 items-center justify-center"><I size={20}>{r.icon}</I></div>
            ),
          )}
        </div>
      </div>

      {/* palette */}
      <div className="flex h-[20px] shrink-0 items-start pt-[2px]">
        <svg width="16" height="16" className="mr-px shrink-0 bg-white"><path d="M0 0l16 16M16 0L0 16" stroke="#7a1f1f" strokeWidth="1.500" /></svg>
        {palette.map((c, i) => (
          <span key={i} className="mr-px h-[16px] w-[16px] shrink-0" style={{ backgroundColor: c }} />
        ))}
        <ChevronUp size={20} strokeWidth={2} className="ml-[6px] mt-[-5px] shrink-0" />
        <ChevronDown size={20} strokeWidth={2} className="ml-[11px] mt-[-5px] shrink-0" />
        <div className="relative z-10 ml-[7px] mt-[-10px] flex h-[27px] w-[18px] shrink-0 flex-col items-center justify-center gap-[3px] rounded-md border border-[#222] bg-[#363636]">
          <span className="h-[2px] w-[13px] bg-white" /><span className="h-[2px] w-[13px] bg-white" /><span className="h-[2px] w-[13px] bg-white" />
        </div>
      </div>

      {/* status bar */}
      <div className="flex h-[42px] shrink-0 items-center">
        <div className="flex w-[46px] flex-col items-end leading-[21px]"><span>Fill:</span><span>Stroke:</span></div>
        <div className="ml-[27px] flex w-[83px] flex-col leading-[21px]"><span>N/A</span><span>N/A</span></div>
        <span className="w-[17px]">O:</span>
        <Spin value="100" cls="w-[72px]" tall={41} pad="pl-[6px]" />
        <span className="ml-[16px] h-[21px] w-[3px] bg-[#3a73d0]" />
        <span className="ml-[6px] w-[60px]">Layer 1</span>
        <span className="ml-[7px]"><I size={16}><path d="M1 9c4-5 14-5 18 0-4 6-14 6-18 0z" stroke={W} strokeWidth="2" /><circle cx="10" cy="9" r="3" fill={W} /><path d="M3 2l2 3M17 2l-2 3M10 1v3" stroke={W} strokeWidth="1.500" /></I></span>
        <span className="ml-[21px]"><I size={16}><path d="M2 9h11v9H2z" fill={W} /><path d="M10 9V5a3 3 0 016 0v2" stroke={W} strokeWidth="1.800" /></I></span>
        <span className="ml-[9px] h-[34px] w-px bg-[#2e2e2e]" />
        <span className="ml-[7px] tracking-[0.05px]"><b>Alt</b>: Select with touch-path, Cycle through objects, Forced Drag</span>
        <div className="ml-auto flex h-[42px] items-center border-l border-[#2e2e2e]">
          <div className="ml-[12px] flex w-[69px] flex-col leading-[21px]">
            <span className="flex justify-between"><span>X:</span><span>153.07</span></span>
            <span className="flex justify-between"><span>Y:</span><span>65.30</span></span>
          </div>
          <span className="ml-[9px] w-[14px]">Z:</span>
          <Spin value="101%" cls="w-[99px]" ctlCls="w-[22px]" text="text-[#e2e2e2]" ctl="text-[#e2e2e2]" tall={41} pad="pl-[9px]" />
          <span className="ml-[11px] w-[12px] text-[#aaa]">R:</span>
          <Spin value="0.00°" cls="w-[107px]" ctlCls="w-[22px]" text="text-[#e2e2e2]" ctl="text-[#e2e2e2]" tall={41} pad="pl-[16px]" />
          <span className="w-[16px]" />
        </div>
      </div>

      {/* windows taskbar */}
      <div className="flex h-[60px] shrink-0 items-center bg-gradient-to-r from-[#d5d8dc] via-[#d9dadd] to-[#eadbdf] text-[#222]">
        <div className="relative ml-[28px] h-[28px] w-[24px] shrink-0 rounded-[45%] bg-gradient-to-b from-[#f6c02c] to-[#f47a14]">
          <span className="absolute left-[11px] top-[-9px] flex h-[18px] w-[18px] items-center justify-center rounded-full bg-[#c42b1c] text-[12px] leading-none text-white">1</span>
        </div>
        <div className="ml-[12px] flex w-[438px] flex-col leading-[20px]"><span>11°C</span><span className="tracking-[0.2px] text-[#444]">Zonnig</span></div>
        <svg width="29" height="29" viewBox="0 0 29 29" className="shrink-0">
          <rect width="14" height="14" fill="#3dbcf4" /><rect x="15" width="14" height="14" fill="#1b9be6" /><rect y="15" width="14" height="14" fill="#1597e4" /><rect x="15" y="15" width="14" height="14" fill="#0a78d4" />
        </svg>
        <div className="ml-[18px] flex h-[38px] w-[273px] shrink-0 items-center rounded-full border-b border-[#c4c4c4] bg-[#f5f5f5] pl-[13px]">
          <Search size={21} strokeWidth={1.8} className="text-[#111]" />
          <span className="ml-[12px] pt-[1px] text-[15px] text-[#444]">Search</span>
          <svg width="58" height="38" viewBox="0 0 58 38" className="ml-auto mr-[5px]">
            <path d="M2 35l8-6h36l10 4-6 5H12z" fill="#e4c08e" />
            <path d="M8 16l20-5 2 18-16 3z" fill="#d4e6bb" stroke="#6f8a55" />
            <path d="M24 14l8-7 2 2-8 7z" fill="#f39a30" />
            <rect x="35" y="6" width="18" height="26" rx="6" fill="#1f74e8" />
            <rect x="41" y="1" width="6" height="6" rx="2" fill="#1558b8" />
            <rect x="37" y="20" width="14" height="10" rx="4" fill="#6aa8f5" />
          </svg>
        </div>
        <div className="ml-[2.5px] flex shrink-0">
          {taskIcons.map((t, i) => (
            <div key={i} className="relative flex h-[48px] w-[55px] items-center justify-center">
              {t.icon}
              {t.dot && <span className="absolute bottom-[-2px] left-[23px] h-[4px] w-[8px] rounded-full bg-[#7a7a7a]" />}
            </div>
          ))}
          <div className="relative flex h-[48px] w-[55px] items-center justify-center">
            <div className="flex h-[48px] w-[48px] items-center justify-center rounded-md bg-[#f4f2f3]"><InkscapeLogo size={32} /></div>
            <span className="absolute bottom-0 left-[18px] h-[4px] w-[20px] rounded-full bg-[#2b8fa3]" />
          </div>
        </div>
        <ChevronUp size={20} strokeWidth={1.8} className="ml-[194px] shrink-0" />
        <Cloud size={24} strokeWidth={1.6} fill="#9c9c9c" className="ml-[18px] shrink-0" />
        <Wifi size={22} strokeWidth={1.6} className="ml-[17px] shrink-0" />
        <svg width="22" height="22" viewBox="0 0 22 22" fill="none" stroke="#222" className="ml-[5px] shrink-0">
          <path d="M3 8h4l5-4v14l-5-4H3z" strokeWidth="1.300" />
          <path d="M15 8c1 2 1 4 0 6" strokeWidth="1.200" />
          <path d="M18 5c2 4 2 8 0 12" stroke="#aaa" strokeWidth="1.200" />
        </svg>
        <svg width="24" height="24" viewBox="0 0 24 24" className="ml-[10px] shrink-0">
          <rect x="3" y="8" width="17" height="11" rx="2" fill="none" stroke="#222" strokeWidth="1.500" />
          <rect x="10" y="10" width="8" height="7" fill="#222" />
          <rect x="20.500" y="11.500" width="2" height="4" fill="#222" />
          <path d="M8 2L4 10h3l-2 6 6-8H8l2-6z" fill="#222" stroke="#e9dcdf" strokeWidth="0.8" />
        </svg>
        <div className="ml-[8px] flex w-[72px] shrink-0 flex-col items-end whitespace-nowrap leading-[20px]"><span>2:59 PM</span><span>3/4/2024</span></div>
        <Bell size={20} strokeWidth={1.5} fill="#114a5c" className="ml-[9px] shrink-0 text-[#114a5c]" />
      </div>
    </div>
  );
}

export default App;
